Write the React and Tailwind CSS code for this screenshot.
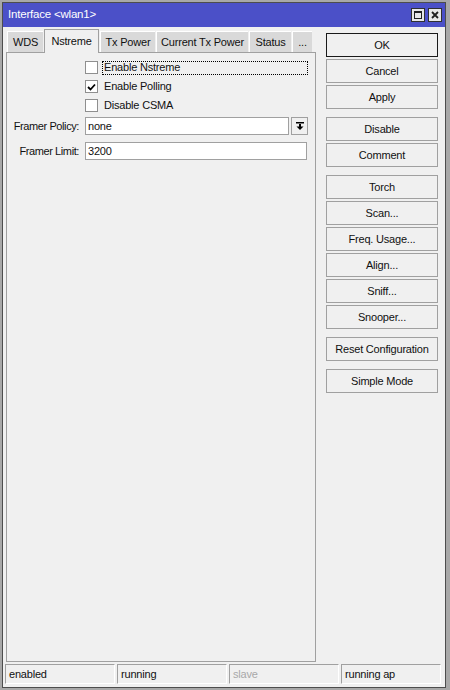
import React from 'react';

const font = { fontFamily: '"Liberation Sans", Arial, sans-serif' };

// boutons de la colonne de droite, groupes separes par un espace plus grand
const groups = [
  ['OK', 'Cancel', 'Apply'],
  ['Disable', 'Comment'],
  ['Torch', 'Scan...', 'Freq. Usage...', 'Align...', 'Sniff...', 'Snooper...'],
  ['Reset Configuration'],
  ['Simple Mode'],
];

const tabs = [
  { name: 'WDS', w: 'w-[36px]' },
  { name: 'Nstreme', w: 'w-[55px]', active: true },
  { name: 'Tx Power', w: 'w-[55px]' },
  { name: 'Current Tx Power', w: 'w-[92px]' },
  { name: 'Status', w: 'w-[42px]' },
  { name: '...', w: 'w-[20px]' },
];

function Btn({ label, primary }) {
  return (
    <div
      className={`h-[24px] flex items-center justify-center bg-[#f0f0f0] border text-[11px] text-[#111] ${
        primary ? 'border-[#1a1a1a]' : 'border-[#a0a0a0]'
      }`}
    >
      {label}
    </div>
  );
}

function Checkbox({ checked }) {
  return (
    <div className="w-[13px] h-[13px] bg-white border border-[#8f8f8f] flex items-center justify-center flex-shrink-0">
      {checked && (
        <svg width="9" height="8" viewBox="0 0 9 8">
          <path d="M1 4 L3.5 6.5 L8 1.5" fill="none" stroke="#000" strokeWidth="1.8" />
        </svg>
      )}
    </div>
  );
}

function StatusCell({ text, dim, w }) {
  return (
    <div className={`${w} h-[20px] border-l border-t border-[#a0a0a0] border-r border-r-white border-b border-b-white flex items-center pl-[3px] text-[11px] ${dim ? 'text-[#a8a8a8]' : 'text-[#111]'}`}>
      {text}
    </div>
  );
}

export default function App() {
  return (
    <div className="w-[450px] h-[690px] bg-[#a8a8a8] pt-[2px] pl-[2px] pr-[4px] pb-[2px] tracking-[-0.2px]" style={font}>
      <div className="w-full h-full border border-[#4d4d4d] bg-[#f0f0f0] flex flex-col text-[#111]">
        {/* barre de titre */}
        <div className="h-[24px] bg-[#4b50c8] flex items-center pl-[5px] pr-[3px]">
          <span className="text-white text-[11.5px]">Interface &lt;wlan1&gt;</span>
          <div className="ml-auto flex gap-[3px]">
            <div className="w-[14px] h-[14px] bg-[#e8e8e8] border border-[#303030] flex items-center justify-center">
              <div className="w-[8px] h-[8px] border border-[#202020] border-t-2" />
            </div>
            <div className="w-[14px] h-[14px] bg-[#e8e8e8] border border-[#303030] flex items-center justify-center">
              <svg width="8" height="8" viewBox="0 0 8 8">
                <path d="M1 1 L7 7 M7 1 L1 7" stroke="#202020" strokeWidth="1.8" />
              </svg>
            </div>
          </div>
        </div>

        <div className="flex-1 flex flex-col pt-[2px] pl-[3px]">
          <div className="flex">
            {/* colonne gauche : onglets + panneau */}
            <div className="w-[310px] flex flex-col">
              <div className="h-[23px] flex items-end pl-[1px] gap-[1px]">
                {tabs.map(t => (
                  <div
                    key={t.name}
                    className={`${t.w} flex items-center justify-center text-[11px] ${
                      t.active
                        ? 'h-[24px] -mb-[1px] bg-[#f0f0f0] border-l border-t border-r border-[#a0a0a0] relative z-10'
                        : 'h-[21px] bg-[#d9d9d9] border-l border-t border-white'
                    }`}
                  >
                    {t.name}
                  </div>
                ))}
              </div>
              <div className="h-[610px] border border-[#a0a0a0] flex flex-col pt-[5px]">
                <div className="h-[19px] flex items-center pl-[78px] pr-[7px]">
                  <Checkbox />
                  <div className="ml-[4px] flex-1 h-[14px] border border-dotted border-black flex items-center pl-[1px] text-[11px]">
                    Enable Nstreme
                  </div>
                </div>
                <div className="h-[19px] flex items-center pl-[78px]">
                  <Checkbox checked />
                  <span className="ml-[6px] text-[11px]">Enable Polling</span>
                </div>
                <div className="h-[19px] flex items-center pl-[78px]">
                  <Checkbox />
                  <span className="ml-[6px] text-[11px]">Disable CSMA</span>
                </div>
                <div className="mt-[2px] h-[18px] flex items-center">
                  <span className="w-[72px] text-right text-[11px] tracking-[-0.4px]">Framer Policy:</span>
                  <div className="ml-[6px] w-[204px] h-[18px] bg-white border border-[#a0a0a0] flex items-center pl-[2px] text-[11px]">
                    none
                  </div>
                  <div className="ml-[2px] w-[17px] h-[18px] bg-[#f0f0f0] border border-[#a0a0a0] flex items-center justify-center">
                    <svg width="8" height="8" viewBox="0 0 8 8">
                      <rect x="0" y="0" width="8" height="1.5" fill="#000" />
                      <rect x="3" y="2" width="2" height="3" fill="#000" />
                      <path d="M0.5 4.5 H7.5 L4 8 Z" fill="#000" />
                    </svg>
                  </div>
                </div>
                <div className="mt-[7px] h-[18px] flex items-center">
                  <span className="w-[72px] text-right text-[11px] tracking-[-0.4px]">Framer Limit:</span>
                  <div className="ml-[6px] w-[222px] h-[18px] bg-white border border-[#a0a0a0] flex items-center pl-[2px] text-[11px]">
                    3200
                  </div>
                </div>
              </div>
            </div>

            {/* colonne droite : boutons */}
            <div className="ml-[10px] w-[112px] pt-[4px] flex flex-col gap-[8px]">
              {groups.map((g, i) => (
                <div key={i} className="flex flex-col gap-[2px]">
                  {g.map(l => (
                    <Btn key={l} label={l} primary={l === 'OK'} />
                  ))}
                </div>
              ))}
            </div>
          </div>

          {/* barre d'etat */}
          <div className="mt-[2px] -ml-[1px] flex gap-[2px]">
            <StatusCell text="enabled" w="w-[110px]" />
            <StatusCell text="running" w="w-[110px]" />
            <StatusCell text="slave" dim w="w-[110px]" />
            <StatusCell text="running ap" w="w-[100px]" />
          </div>
        </div>
      </div>
    </div>
  );
}
